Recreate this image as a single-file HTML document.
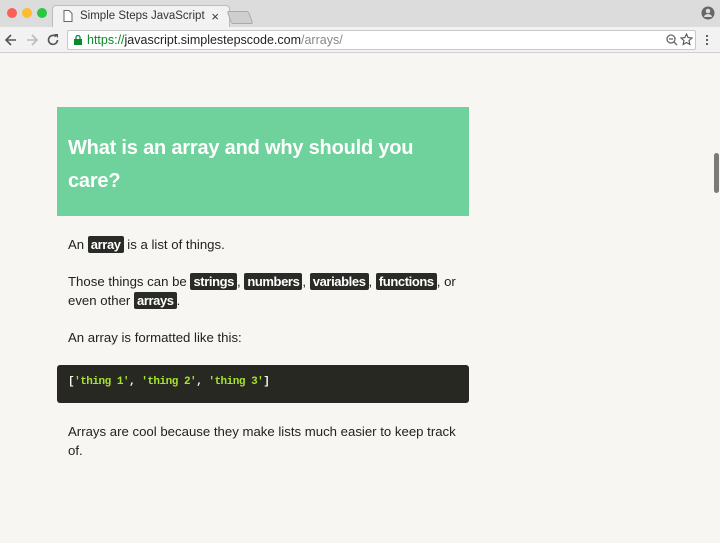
<!DOCTYPE html>
<html><head><style>
*{margin:0;padding:0;box-sizing:border-box}
body{width:720px;height:543px;overflow:hidden;background:#f7f6f3;font-family:"Liberation Sans",sans-serif;position:relative}
.tabs{position:absolute;left:0;top:0;width:720px;height:27px;background:#dcdcdc}
.dot{position:absolute;top:8px;width:10px;height:10px;border-radius:50%}
.tab{position:absolute;left:52px;top:5px;width:178px;height:22px;background:#f2f2f2;border:1px solid #bcbcbc;border-bottom:none;border-radius:4px 4px 0 0;font-size:11.5px;color:#333;padding:4px 0 0 27px}
.tb{position:absolute;left:0;top:27px;width:720px;height:26px;background:#f2f2f2;border-bottom:1px solid #cfcfcf}
.url{position:absolute;left:67px;top:3px;width:629px;height:20px;background:#fff;border:1px solid #c8c8c8;border-radius:2px;font-size:12.5px;color:#222;padding:2px 0 0 19px}
.hd{position:absolute;left:57px;top:107px;width:412px;height:109px;background:#6fd19b;color:#fff;font-size:20px;font-weight:bold;padding:25px 11px 0;line-height:33px;letter-spacing:-.2px}
.c{position:absolute;left:68px;font-size:13.2px;color:#222;line-height:19px}
code{font-family:"Liberation Sans",sans-serif;background:#2a2a27;color:#fff;padding:1px 3px;border-radius:2px;font-weight:bold;font-size:13px;letter-spacing:-.4px}
.pre{position:absolute;left:57px;top:365px;width:412px;height:38px;background:#272822;border-radius:3px;color:#f8f8f2;font-family:"Liberation Mono",monospace;font-size:11px;font-weight:bold;padding:11px 11px;letter-spacing:-.5px}
.pre b{color:#a6e22e}
</style></head><body>
<div class="tabs">
<div class="dot" style="left:7px;background:#fc5f57"></div>
<div class="dot" style="left:22px;background:#fdbc2e"></div>
<div class="dot" style="left:37px;background:#28c840"></div>
<div class="tab">Simple Steps JavaScript<span style="position:absolute;right:10px;top:3px;font-size:13px">×</span>
<svg style="position:absolute;left:10px;top:4px" width="10" height="12"><path d="M1 .5h5l3 3v8H1z" fill="#fff" stroke="#666"/></svg></div>
<div style="position:absolute;left:229px;top:11px;width:22px;height:13px;background:#cfcfcf;border:1px solid #aaa;transform:skewX(20deg);border-radius:2px"></div>
<svg style="position:absolute;left:701px;top:6px" width="14" height="14"><circle cx="7" cy="7" r="6.5" fill="#666"/><circle cx="7" cy="5" r="2.3" fill="#dcdcdc"/><path d="M3 11a4 3 0 0 1 8 0z" fill="#dcdcdc"/></svg>
</div>
<div class="tb">
<svg style="position:absolute;left:4px;top:6px" width="14" height="14"><path d="M12 7H2M7 2L2 7l5 5" stroke="#555" stroke-width="1.6" fill="none"/></svg>
<svg style="position:absolute;left:25px;top:6px" width="14" height="14"><path d="M2 7h10M7 2l5 5-5 5" stroke="#bbb" stroke-width="1.6" fill="none"/></svg>
<svg style="position:absolute;left:46px;top:6px" width="14" height="14"><path d="M11.5 7A4.5 4.5 0 1 1 10 3.5" stroke="#555" stroke-width="1.6" fill="none"/><path d="M8 1h4v4z" fill="#555"/></svg>
<div class="url"><svg style="position:absolute;left:6px;top:4px" width="8" height="10"><rect x="0" y="4" width="8" height="6" fill="#0a8a2a"/><path d="M2 4V2.5a2 2 0 0 1 4 0V4" stroke="#0a8a2a" stroke-width="1.3" fill="none"/></svg><span style="color:#0a8a2a">https://</span>javascript.simplestepscode.com<span style="color:#888">/arrays/</span>
<svg style="position:absolute;left:598px;top:3px" width="12" height="12"><circle cx="5" cy="5" r="4" stroke="#666" fill="none" stroke-width="1.3"/><path d="M8 8l3 3M3 5h4" stroke="#666" stroke-width="1.3"/></svg>
<svg style="position:absolute;left:612px;top:2px" width="13" height="13"><path d="M6.5 1l1.6 3.6 3.9.4-3 2.6.9 3.9-3.4-2-3.4 2 .9-3.9-3-2.6 3.9-.4z" stroke="#555" fill="none" stroke-width="1.1"/></svg></div>
<div style="position:absolute;left:706px;top:7px;width:2px;height:12px;background:radial-gradient(circle,#555 1px,transparent 1.2px) 0 0/2px 4px"></div>
</div>
<div style="position:absolute;left:714px;top:153px;width:5px;height:40px;background:#7b7b78;border-radius:3px"></div>
<div class="hd">What is an array and why should you care?</div>
<div class="c" style="top:235px">An <code>array</code> is a list of things.</div>
<div class="c" style="top:272px;width:400px">Those things can be <code>strings</code>, <code>numbers</code>, <code>variables</code>, <code>functions</code>, or even other <code>arrays</code>.</div>
<div class="c" style="top:328px">An array is formatted like this:</div>
<div class="pre">[<b>'thing 1'</b>, <b>'thing 2'</b>, <b>'thing 3'</b>]</div>
<div class="c" style="top:422px;width:395px">Arrays are cool because they make lists much easier to keep track of.</div>
</body></html>
